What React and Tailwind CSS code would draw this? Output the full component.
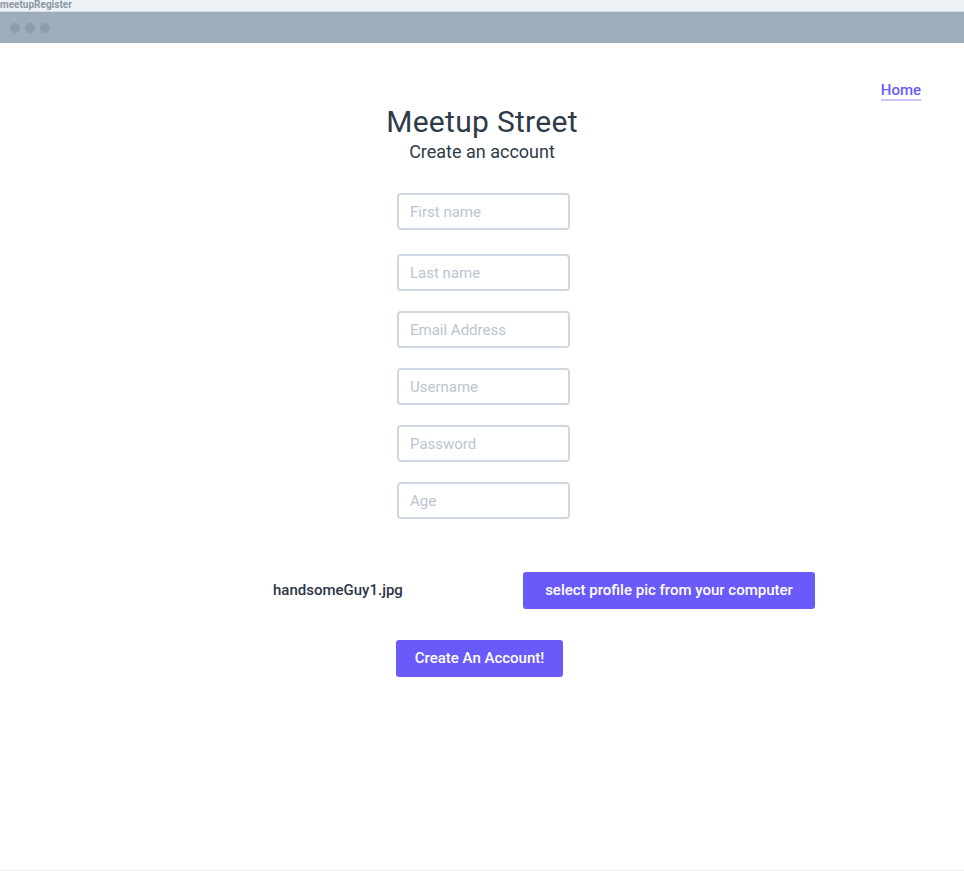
import React from 'react';

const fields = ['First name', 'Last name', 'Email Address', 'Username', 'Password', 'Age'];

export default function App() {
  return (
    <div className="w-[964px] h-[871px] bg-white flex flex-col border-b border-[#ececec]" style={{ fontFamily: 'Roboto, "Noto Sans", sans-serif' }}>
      <div className="h-[11px] bg-[#eef1f5] text-[10px] leading-[10px] font-bold text-[#8b97a3]">meetupRegister</div>
      <div className="h-[32px] bg-[#9eadba] flex items-center gap-[5px] pl-[10px] border-t border-[#d6dde3]">
        <span className="w-[10px] h-[10px] rounded-full bg-[#8e9dab]" />
        <span className="w-[10px] h-[10px] rounded-full bg-[#8e9dab]" />
        <span className="w-[10px] h-[10px] rounded-full bg-[#8e9dab]" />
      </div>

      <div className="flex justify-end pr-[43px] pt-[38px]">
        <a href="#" className="text-[15px] leading-[18px] font-medium text-[#6a5af9] border-b-2 border-[#c9c3fd]">Home</a>
      </div>

      <div className="flex flex-col items-center">
        <h1 className="mt-[4px] text-[30px] leading-[34px] text-[#2d3a48] tracking-[0.3px]">Meetup Street</h1>
        <p className="mt-[2px] text-[18px] leading-[22px] text-[#2d3a48]">Create an account</p>
      </div>

      <div className="ml-[397px] w-[173px] flex flex-col mt-[30px]">
        {fields.map((f, i) => (
          <input
            key={f}
            type="text"
            placeholder={f}
            className={`h-[37px] w-[173px] rounded-[4px] border-2 border-[#cfd8e2] px-[11px] text-[15px] text-[#2d3748] placeholder-[#b9c5d1] outline-none ${i === 0 ? '' : i === 1 ? 'mt-[24px]' : 'mt-[20px]'}`}
          />
        ))}
      </div>

      <div className="flex items-center mt-[53px] ml-[273px]">
        <span className="w-[250px] text-[15px] font-medium text-[#2d3748]">handsomeGuy1.jpg</span>
        <button className="h-[37px] w-[292px] rounded-[3px] bg-[#6a5af9] text-white text-[15px] font-medium">select profile pic from your computer</button>
      </div>

      <div className="ml-[396px] mt-[31px]">
        <button className="h-[37px] w-[167px] rounded-[3px] bg-[#6a5af9] text-white text-[15px] font-medium">Create An Account!</button>
      </div>
    </div>
  );
}
